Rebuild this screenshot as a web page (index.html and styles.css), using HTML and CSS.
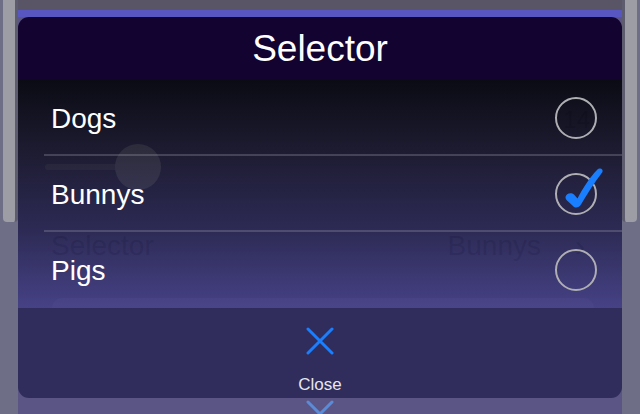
FILE: index.html
```html
<!DOCTYPE html>
<html lang="en">
<head>
<meta charset="utf-8">
<title>Selector</title>
<link rel="stylesheet" href="styles.css">
</head>
<body>
<div class="screen">
  <div class="side side-left"><div class="rail"></div></div>
  <div class="app">
    <div class="app-top"></div>
    <div class="app-band"></div>
    <div class="app-content">
      <div class="g-value-row"><span class="g-value">14</span></div>
      <div class="g-slider"><div class="g-track"></div><div class="g-knob"></div></div>
      <div class="g-cell">
        <span class="g-label">Selector</span>
        <span class="g-detail"><span>Bunnys</span><span class="g-chev">›</span></span>
      </div>
      <div class="g-button"></div>
      <div class="g-x">
        <svg width="28" height="28" viewBox="0 0 28 28"><path d="M2 2 L26 26 M26 2 L2 26" fill="none" stroke="currentColor" stroke-width="3" stroke-linecap="round"/></svg>
      </div>
    </div>
  </div>
  <div class="side side-right"><div class="rail"></div></div>

  <div class="modal">
    <div class="modal-header">Selector</div>
    <div class="modal-list">
      <div class="row"><span class="row-label">Dogs</span><span class="radio"></span></div>
      <div class="row"><span class="row-label">Bunnys</span><span class="radio checked">
        <svg class="check" width="52" height="46" viewBox="0 0 52 46"><path d="M9.5 34 C10 30.5 15 29 18 31.5 L21.5 35.5 C27 25 34 14 41 7 C43.5 4.5 47.5 5.5 46.5 9 C39 19 31 31 25 41.5 C23 45 19 45.5 17 43 L11 37.5 C10 36.5 9.4 35.3 9.5 34 Z" fill="#1a7fff"/></svg>
      </span></div>
      <div class="row row-last"><span class="row-label">Pigs</span><span class="radio"></span></div>
    </div>
    <div class="modal-footer">
      <svg class="close-icon" width="28" height="28" viewBox="0 0 28 28"><path d="M2 2 L26 26 M26 2 L2 26" fill="none" stroke="#1a7fff" stroke-width="3" stroke-linecap="round"/></svg>
      <span class="close-label">Close</span>
    </div>
  </div>
</div>
</body>
</html>
```
FILE: styles.css
```css
* { box-sizing: border-box; }
html, body { margin: 0; padding: 0; }
body {
  width: 640px;
  height: 414px;
  overflow: hidden;
  background: #6e6e86;
  font-family: "Liberation Sans", Arial, sans-serif;
}
.screen {
  position: relative;
  width: 640px;
  height: 414px;
  display: flex;
  overflow: hidden;
}
.side {
  width: 18px;
  flex: none;
  background: #6e6e86;
}
.side-left { padding-left: 3px; }
.side-right { padding-right: 3px; display: flex; justify-content: flex-end; }
.rail {
  width: 15px;
  height: 222px;
  background: #9d9da6;
  border-radius: 0 0 4px 4px;
}
.side-left .rail { border-right: 3px solid #5d5c6e; }
.side-right .rail { border-left: 3px solid #5d5c6e; }

.app {
  width: 604px;
  flex: none;
  display: flex;
  flex-direction: column;
  background: #5a5585;
}
.app-top { height: 10px; background: #5a5566; flex: none; }
.app-band { height: 7px; background: #5856c0; flex: none; }
.app-content {
  flex: 1;
  display: flex;
  flex-direction: column;
  overflow: hidden;
  color: #2a2848;
}
.app-content > * { flex: none; }
.g-value-row {
  margin-top: 83px;
  height: 40px;
  display: flex;
  justify-content: flex-end;
  align-items: center;
  padding-right: 32px;
  font-size: 24px;
  color: #403c6a;
}
.g-slider {
  margin-top: 4px;
  height: 46px;
  display: flex;
  align-items: center;
  padding-left: 27px;
}
.g-track {
  width: 75px;
  height: 6px;
  border-radius: 3px;
  background: #9a9aa8;
}
.g-knob {
  width: 46px;
  height: 46px;
  border-radius: 50%;
  background: #e4e4ec;
  margin-left: -5px;
}
.g-cell {
  margin-top: 38px;
  height: 36px;
  display: flex;
  justify-content: space-between;
  align-items: center;
  padding-left: 33px;
  padding-right: 37px;
  font-size: 28px;
  line-height: 20px;
}
.g-detail { display: flex; align-items: center; gap: 34px; }
.g-chev { font-size: 30px; }
.g-button {
  margin: 34px 28px 0 34px;
  height: 60px;
  border-radius: 10px;
  background: #77729f;
}
.g-x {
  margin-top: 42px;
  display: flex;
  justify-content: center;
  color: #5b8bd6;
}
.g-x svg { display: block; }

.modal {
  position: absolute;
  top: 17px;
  left: 18px;
  width: 604px;
  height: 381px;
  border-radius: 11px;
  overflow: hidden;
  display: flex;
  flex-direction: column;
}
.modal-header {
  height: 63px;
  flex: none;
  background: #130330;
  color: #ffffff;
  font-size: 37px;
  line-height: 1;
  display: flex;
  align-items: center;
  justify-content: center;
}
.modal-list {
  height: 228px;
  flex: none;
  display: flex;
  flex-direction: column;
  background: linear-gradient(to bottom,
    rgba(0, 1, 5, 0.88) 0%,
    rgba(20, 19, 36, 0.88) 30%,
    rgba(38, 36, 77, 0.88) 65%,
    rgba(67, 63, 134, 0.88) 100%);
}
.row {
  height: 76px;
  flex: none;
  margin-left: 26px;
  padding: 2px 25px 0 7px;
  display: flex;
  align-items: center;
  justify-content: space-between;
  border-bottom: 2px solid rgba(160, 160, 172, 0.3);
}
.row-last { border-bottom: none; padding-top: 0; }
.row-label {
  color: #ffffff;
  font-size: 28px;
  line-height: 1;
  padding-top: 2px;
}
.radio {
  position: relative;
  width: 42px;
  height: 42px;
  border-radius: 50%;
  border: 2px solid #aeaeb3;
  flex: none;
}
.check {
  position: absolute;
  left: -1px;
  top: -12px;
  display: block;
}
.modal-footer {
  flex: 1;
  background: #302c5c;
  display: flex;
  flex-direction: column;
  align-items: center;
  padding-top: 19px;
}
.close-icon { display: block; }
.close-label {
  margin-top: 21px;
  color: #e6e6ee;
  font-size: 17px;
  line-height: 1;
}
```
